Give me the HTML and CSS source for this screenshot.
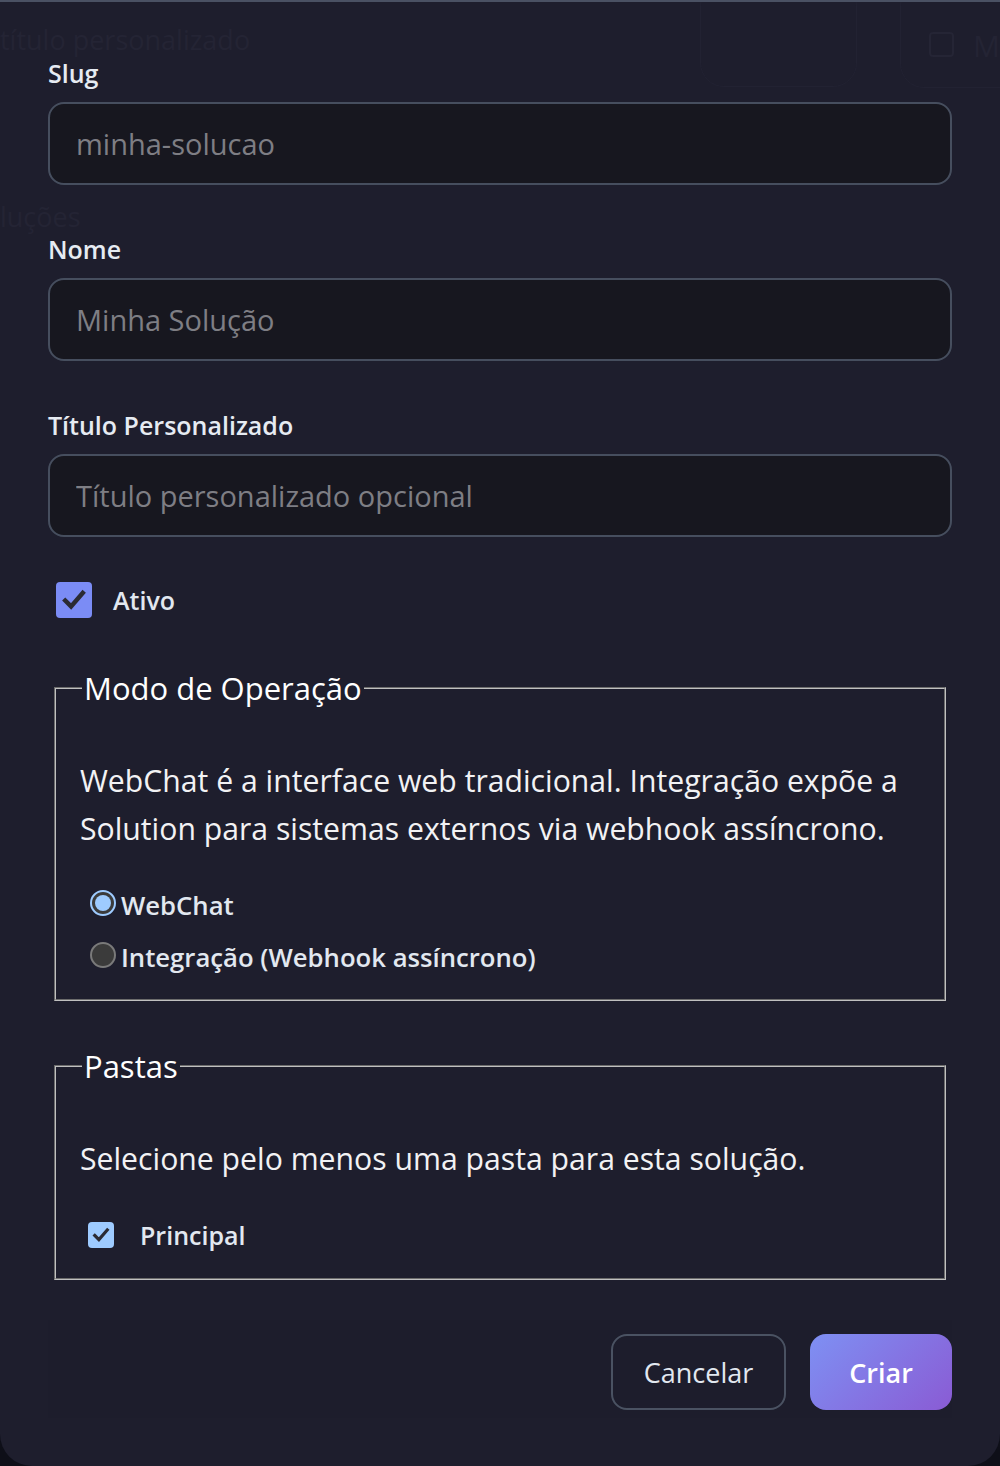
FILE: index.html
```html
<!DOCTYPE html>
<html lang="pt-BR">
<head>
<meta charset="utf-8">
<title>Nova Solução</title>
<link rel="stylesheet" href="styles.css">
</head>
<body>
<div class="modal">
  <span class="ghost ghost-title">título personalizado</span>
  <span class="ghost ghost-sol">luções</span>
  <span class="ghost ghost-box"></span>
  <span class="ghost ghost-m">M</span>
  <span class="ghost ghost-pill"></span>
  <span class="ghost ghost-pill ghost-pill2"></span>

  <form class="form">
    <div class="field">
      <label class="label" for="slug">Slug</label>
      <input class="input" id="slug" type="text" placeholder="minha-solucao">
    </div>
    <div class="field">
      <label class="label" for="nome">Nome</label>
      <input class="input" id="nome" type="text" placeholder="Minha Solução">
    </div>
    <div class="field">
      <label class="label" for="titulo">Título Personalizado</label>
      <input class="input" id="titulo" type="text" placeholder="Título personalizado opcional">
    </div>

    <div class="check-row">
      <span class="check check-lg">
        <svg viewBox="0 0 24 24" width="28" height="28"><path d="M4.5 12.5l5 5L19.5 6" fill="none" stroke="#2b2b33" stroke-width="3.8" stroke-linecap="square"/></svg>
      </span>
      <span class="check-label">Ativo</span>
    </div>

    <fieldset class="group">
      <legend class="legend">Modo de Operação</legend>
      <p class="desc">WebChat é a interface web tradicional. Integração expõe a Solution para sistemas externos via webhook assíncrono.</p>
      <div class="radio-row">
        <span class="radio radio-on"><span class="radio-dot"></span></span>
        <span class="radio-label">WebChat</span>
      </div>
      <div class="radio-row">
        <span class="radio radio-off"></span>
        <span class="radio-label">Integração (Webhook assíncrono)</span>
      </div>
    </fieldset>

    <fieldset class="group group-pastas">
      <legend class="legend">Pastas</legend>
      <p class="desc">Selecione pelo menos uma pasta para esta solução.</p>
      <div class="check-row check-row-sm">
        <span class="check check-sm">
          <svg viewBox="0 0 24 24" width="20" height="20"><path d="M4.5 12.5l5 5L19.5 6" fill="none" stroke="#2b2b33" stroke-width="3.8" stroke-linecap="square"/></svg>
        </span>
        <span class="check-label">Principal</span>
      </div>
    </fieldset>

    <div class="footer">
      <button type="button" class="btn btn-cancel">Cancelar</button>
      <button type="button" class="btn btn-primary">Criar</button>
    </div>
  </form>
</div>
</body>
</html>
```

FILE: styles.css
```css
* { box-sizing: border-box; }

html, body {
  margin: 0;
  padding: 0;
  background: #0e0f18;
}

body {
  font-family: "Open Sans", "Noto Sans", sans-serif;
  color: #e2e8f0;
}

.modal {
  position: relative;
  width: 1000px;
  height: 1466px;
  background: #1e1e2d;
  border-top: 2px solid #4a5163;
  border-radius: 0 0 32px 32px;
  overflow: hidden;
}

/* faint content of the page behind the modal */
.ghost {
  position: absolute;
  color: #242434;
  font-size: 27px;
  line-height: 20px;
}
.ghost-title { left: 0; top: 28px; }
.ghost-sol { left: 0; top: 205px; }
.ghost-m { left: 973px; top: 32px; font-size: 30px; line-height: 24px; }
.ghost-box {
  left: 929px; top: 30px; width: 25px; height: 25px;
  border: 2px solid #252535; border-radius: 4px;
}
.ghost-pill {
  left: 900px; top: -20px; width: 140px; height: 106px;
  border: 1px solid #222232; border-radius: 24px;
}
.ghost-pill2 {
  left: 700px; width: 157px; height: 105px;
}

.form {
  position: relative;
  padding: 56px 48px 0;
}

.field {
  margin-bottom: 49px;
}
.field:nth-child(3) { margin-bottom: 45px; }

.label {
  display: block;
  font-size: 25px;
  font-weight: 600;
  line-height: 30px;
  color: #e6ebf2;
  margin-bottom: 14px;
}

.input {
  display: block;
  width: 100%;
  height: 83px;
  padding: 0 26px;
  background: #17171f;
  border: 2px solid #464e5e;
  border-radius: 16px;
  font-family: inherit;
  font-size: 29px;
  color: #e2e8f0;
  outline: none;
}
.input::placeholder { color: #7e7e84; }

.check-row {
  display: flex;
  align-items: center;
  gap: 21px;
  margin: 0 0 49px 8px;
  height: 36px;
}

.check {
  display: flex;
  align-items: center;
  justify-content: center;
  flex: none;
}
.check-lg {
  width: 36px;
  height: 36px;
  background: #7b8cf5;
  border-radius: 4px;
}
.check-sm {
  width: 26px;
  height: 26px;
  background: #9ecbff;
  border-radius: 4px;
}

.check-label {
  font-size: 25px;
  font-weight: 600;
  color: #e2e8f0;
}

.group {
  margin: 0 6px 44px;
  padding: 0 24px 16px 24px;
  border: 2px groove #c0c0c0;
}
.group-pastas { margin-bottom: 40px; padding-bottom: 5px; }

.legend {
  font-size: 31px;
  padding: 0 2px;
  margin-left: 2px;
  color: #ffffff;
  line-height: 42px;
}

.desc {
  margin: 48px 0 26px;
  font-size: 30.2px;
  line-height: 48px;
  color: #f2f2f4;
}

.radio-row {
  display: flex;
  align-items: center;
  gap: 5px;
  height: 52px;
  margin-left: 10px;
}

.radio {
  width: 26px;
  height: 26px;
  border-radius: 50%;
  flex: none;
  display: flex;
  align-items: center;
  justify-content: center;
  margin-top: -4px;
}
.radio-on {
  border: 2px solid #9ecbff;
  background: #3b3b3b;
}
.radio-dot {
  width: 16px;
  height: 16px;
  border-radius: 50%;
  background: #9ecbff;
}
.radio-off {
  border: 2px solid #7a7a7a;
  background: #3b3b3b;
}

.radio-label {
  font-size: 25.7px;
  font-weight: 600;
  color: #e2e8f0;
}

.check-row-sm {
  margin: 0 0 12px 8px;
  gap: 26px;
  height: 52px;
}

.footer {
  display: flex;
  justify-content: flex-end;
  gap: 24px;
  padding: 14px 0 8px;
  background: #1d1d2c;
}

.btn {
  height: 76px;
  border-radius: 16px;
  font-family: inherit;
  font-size: 27px;
  cursor: pointer;
}
.btn-cancel {
  width: 175px;
  background: transparent;
  border: 2px solid #4a5262;
  color: #e2e8f0;
}
.btn-primary {
  width: 142px;
  border: none;
  background: linear-gradient(135deg, #7e90f3 0%, #8a5bd4 100%);
  color: #ffffff;
  font-weight: 600;
}
```
